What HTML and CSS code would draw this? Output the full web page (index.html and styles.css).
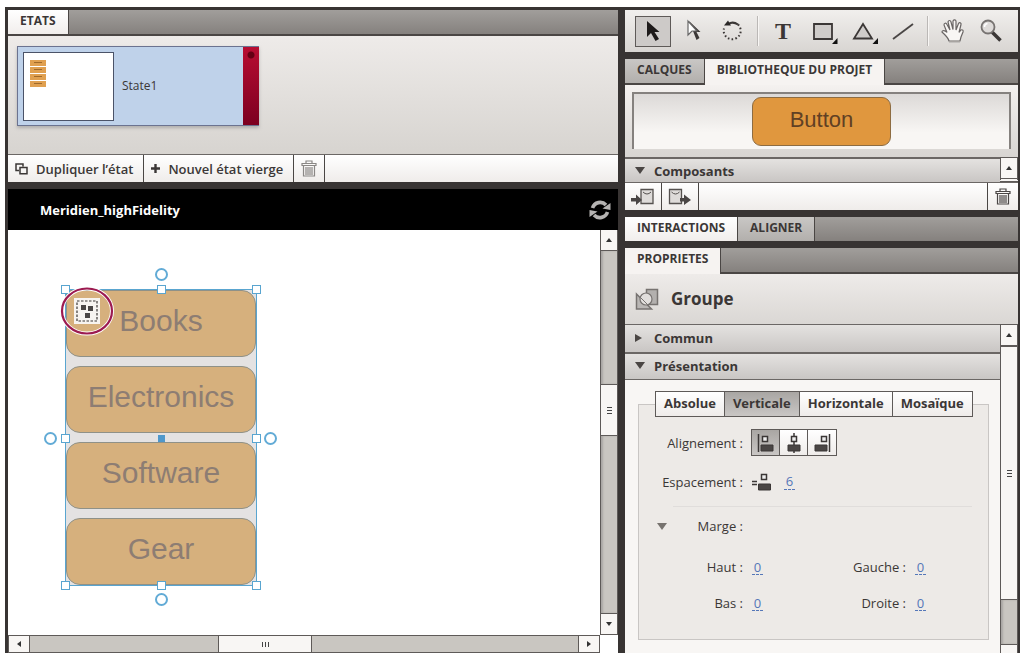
FILE: index.html
```html
<!DOCTYPE html>
<html lang="fr">
<head>
<meta charset="utf-8">
<title>Meridien_highFidelity</title>
<link rel="stylesheet" href="styles.css">
</head>
<body>
<div class="app">
  <main class="column">
    <section class="states">
      <div class="tabs"><button class="tab active">ETATS</button></div>
      <div class="states-body">
        <button class="state-card">
          <span class="thumb"><span class="mini"><i></i><i></i><i></i><i></i></span></span>
          <span class="state-name">State1</span>
          <span class="state-strip"></span>
        </button>
      </div>
      <div class="actions">
        <button class="action">
          <svg width="13" height="12" viewBox="0 0 13 12" fill="none" stroke="#3b3736" stroke-width="1.5"><path d="M4 7.500H1V1h7v2.500M5 4.500h7v6.300H5z"/></svg>
          Dupliquer l’état</button>
        <button class="action">
          <svg width="9" height="9" viewBox="0 0 9 9" stroke="#3b3736" stroke-width="2.400"><path d="M4.500 0v9M0 4.500h9"/></svg>
          Nouvel état vierge</button>
        <button class="action trash" aria-label="Supprimer l’état">
          <svg width="16" height="17" viewBox="0 0 16 17" fill="none" stroke="#8a8785" stroke-width="1.200"><path d="M1 5.500V3.500h14v2zM5 3V1h6v2M2.500 6v10h11V6M5 7v8M7 7v8M9 7v8M11 7v8"/></svg>
        </button>
      </div>
    </section>

    <section class="document">
      <header class="doc-head">
        <h1>Meridien_highFidelity</h1>
        <button class="refresh" aria-label="Actualiser">
          <svg width="22" height="22" viewBox="0 0 22 22" fill="none" stroke="#b5b3b2" stroke-width="3.600"><path d="M3.500 9a8 8 0 0 1 13.500-3M18.500 13a8 8 0 0 1-13.500 3"/><path d="M21.500 4v7l-8-1.500zM.5 18v-7l8 1.500z" fill="#b5b3b2" stroke="none"/></svg>
        </button>
      </header>
      <div class="work">
        <div class="canvas">
          <div class="group">
            <span class="item">Books</span>
            <span class="item">Electronics</span>
            <span class="item">Software</span>
            <span class="item">Gear</span>
            <i class="handle n w"></i><i class="handle n mid"></i><i class="handle n e"></i>
            <i class="handle w half"></i><i class="handle e half"></i>
            <i class="handle s w"></i><i class="handle s mid"></i><i class="handle s e"></i>
            <i class="pivot"></i>
            <i class="knob top"></i><i class="knob left"></i><i class="knob right"></i><i class="knob bottom"></i>
            <svg class="badge" width="54" height="50" viewBox="0 0 54 50">
              <rect x="14" y="12" width="26" height="26" fill="#f7f4f1"/>
              <rect x="17" y="15" width="20" height="20" fill="none" stroke="#3b3736" stroke-width="1.200" stroke-dasharray="2.500 1.500"/>
              <path d="M21 19h5v5h-5zM28 20h5v5h-5zM25 27h5v5h-5z" fill="#4a4645"/>
              <ellipse cx="27" cy="25" rx="25" ry="22.500" fill="none" stroke="#fff" stroke-width="4"/>
              <ellipse cx="27" cy="25" rx="25" ry="22.500" fill="none" stroke="#9c1a50" stroke-width="2.200"/>
            </svg>
          </div>
        </div>
        <div class="vbar">
          <button class="sb" aria-label="Haut"><i class="tri up"></i></button>
          <div class="track before"></div>
          <div class="grip">
            <svg width="5" height="8" viewBox="0 0 5 8" stroke="#444"><path d="M0 1.500h5M0 4.500h5M0 7.500h5"/></svg>
          </div>
          <div class="track after"></div>
          <button class="sb" aria-label="Bas"><i class="tri down"></i></button>
        </div>
        <div class="hbar">
          <button class="sb" aria-label="Gauche"><i class="tri prev"></i></button>
          <div class="track before"></div>
          <div class="grip">
            <svg width="8" height="5" viewBox="0 0 8 5" stroke="#444"><path d="M1.500 0v5M4.500 0v5M7.500 0v5"/></svg>
          </div>
          <div class="track after"></div>
          <button class="sb" aria-label="Droite"><i class="tri next"></i></button>
        </div>
      </div>
    </section>
  </main>

  <aside class="column">
    <div class="toolbar">
      <button class="tool on" aria-label="Sélection"><svg width="30" height="28" viewBox="0 0 30 28"><path d="M9 4v16l4-4 4.500 8 3.500-2-4.500-7h5z" fill="#1d1a1a"/></svg></button>
      <button class="tool" aria-label="Sous-sélection"><svg width="30" height="28" viewBox="0 0 30 28"><path d="M15 14l3.500 9 3-2-3-6h4L11 4z" fill="#3b3736"/><path d="M10 4v14l4-4h5z" fill="#fff" stroke="#666" stroke-width="1.200"/></svg></button>
      <button class="tool" aria-label="Rotation"><svg width="30" height="28" viewBox="0 0 30 28" fill="none" stroke="#3b3736" stroke-width="2"><path d="M10 7q5-3 10 0.500"/><path d="M20 7.500a8.500 8.500 0 1 1-14 4" stroke-dasharray="1.600 2.200"/><path d="M6 8.500l4-5 3 5z" fill="#2b2828" stroke="none"/></svg></button>
      <span class="sep"></span>
      <button class="tool type">T</button>
      <button class="tool" aria-label="Rectangle"><svg width="30" height="28" viewBox="0 0 30 28"><path d="M6 7h18v15H6z" fill="#cfccca" stroke="#3b3736" stroke-width="1.800"/><path d="M29.500 21v6H24z" fill="#111"/></svg></button>
      <button class="tool" aria-label="Triangle"><svg width="30" height="28" viewBox="0 0 30 28"><path d="M15 7L24 21.500H6z" fill="#cfccca" stroke="#3b3736" stroke-width="1.800"/><path d="M30 21v6h-5.500z" fill="#111"/></svg></button>
      <button class="tool" aria-label="Ligne"><svg width="30" height="28" viewBox="0 0 30 28"><path d="M5 22L25 7" stroke="#4a4645" stroke-width="1.800"/></svg></button>
      <span class="sep"></span>
      <button class="tool" aria-label="Main"><svg width="30" height="28" viewBox="0 0 30 28"><path d="M11 24c-1-4-4-6-7-9 0-2 3-2 5 .5L6 8c0-2 2-2.500 3-.5l3 5.500-2-8c.5-2 2.500-2 3 0l2 7.500V4c1-1.800 3-1.200 3 .5v8.500l2.500-6.500c1-1.500 3-.5 2.500 1l-2 8 2-2.500c1.500-.8 2.500.5 2 2L23 20l-1 4z" fill="#f8f6f4" stroke="#6a6665" stroke-width="1.200"/><path d="M11 25h11" stroke="#aaa7a5"/></svg></button>
      <button class="tool" aria-label="Zoom"><svg width="30" height="28" viewBox="0 0 30 28"><path d="M14 15l8.500 8.500" stroke="#3b3736" stroke-width="3.600"/><circle cx="10" cy="10" r="6.500" fill="#dedbd9" stroke="#777371" stroke-width="1.800"/><path d="M6.500 10a3.500 3.500 0 0 1 3-3.500" stroke="#fff" stroke-width="1.500" fill="none"/></svg></button>
    </div>

    <section class="library">
      <div class="tabs"><button class="tab">CALQUES</button><button class="tab active">BIBLIOTHEQUE DU PROJET</button></div>
      <div class="preview"><div class="well"><span class="sample">Button</span></div></div>
      <div class="lib-head">
        <button class="bar"><i class="caret open"></i>Composants</button>
        <button class="sb" aria-label="Défiler"><i class="tri up"></i></button>
      </div>
      <div class="actions lib-actions">
        <button class="action" aria-label="Importer"><svg width="24" height="18" viewBox="0 0 24 18"><path d="M10 1.500h12v14H10z" fill="#dedbd9" stroke="#55514f" stroke-width="1.300"/><path d="M12 4q4 4 8 0" fill="none" stroke="#55514f"/><path d="M0 10h5V6.500l6 5.500-6 5v-3.500H0z" fill="#4a4645"/></svg></button>
        <button class="action" aria-label="Exporter"><svg width="24" height="18" viewBox="0 0 24 18"><path d="M1.500 1.500h12v14h-12z" fill="#dedbd9" stroke="#55514f" stroke-width="1.300"/><path d="M3.500 4q4 4 8 0" fill="none" stroke="#55514f"/><path d="M12 10h4V6.500l7 5.500-7 5v-3.500h-4z" fill="#4a4645"/></svg></button>
        <button class="action last" aria-label="Supprimer"><svg width="16" height="17" viewBox="0 0 16 17" fill="none" stroke="#4a4645" stroke-width="1.200"><path d="M1 5.500V3.500h14v2zM5 3V1h6v2M2.500 6v10h11V6M5 7v8M7 7v8M9 7v8M11 7v8"/></svg></button>
      </div>
    </section>

    <div class="tabs short"><button class="tab active">INTERACTIONS</button><button class="tab">ALIGNER</button></div>

    <section class="props">
      <div class="tabs"><button class="tab active">PROPRIETES</button></div>
      <div class="props-title">
        <svg width="24" height="23" viewBox="0 0 24 23"><path d="M11.500 1.500h11v15h-11z" fill="#b3b0ae" stroke="#777371" stroke-width="1.500"/><path d="M1.500 6v15h15z" fill="#bab7b5" stroke="#777371" stroke-width="1.500"/><circle cx="11" cy="11" r="6" fill="#e2dfdd" stroke="#777371" stroke-width="1.200"/><path d="M5 9l9 9" stroke="#777371"/></svg>
        <h2>Groupe</h2>
      </div>
      <div class="props-main">
        <div class="props-list">
          <button class="bar"><i class="caret"></i>Commun</button>
          <button class="bar second"><i class="caret open"></i>Présentation</button>
          <div class="form">
            <fieldset>
              <legend><span class="modes"><button>Absolue</button><button class="on">Verticale</button><button>Horizontale</button><button>Mosaïque</button></span></legend>
              <div class="row align">
                <span class="label">Alignement :</span>
                <span class="aligns">
                  <button class="on" aria-label="Gauche"><svg width="20" height="20" viewBox="0 0 20 20"><path d="M2.500 1v18" stroke="#3b3736" stroke-width="1.500"/><path d="M6.500 3.500h5v5h-5z" fill="#eee" stroke="#3b3736" stroke-width="1.500"/><path d="M5 12h12v6H5z" fill="#4a4645" stroke="#3b3736"/></svg></button>
                  <button aria-label="Centre"><svg width="20" height="20" viewBox="0 0 20 20"><path d="M10 0v20" stroke="#3b3736" stroke-width="1.500"/><path d="M7.500 3.500h5v5h-5z" fill="#eee" stroke="#3b3736" stroke-width="1.500"/><path d="M4 12h12v6H4z" fill="#4a4645" stroke="#3b3736"/></svg></button>
                  <button aria-label="Droite"><svg width="20" height="20" viewBox="0 0 20 20"><path d="M17.500 1v18" stroke="#3b3736" stroke-width="1.500"/><path d="M9.500 3.500h5v5h-5z" fill="#eee" stroke="#3b3736" stroke-width="1.500"/><path d="M3 12h12v6H3z" fill="#4a4645" stroke="#3b3736"/></svg></button>
                </span>
              </div>
              <div class="row spacing">
                <label class="label" for="gap">Espacement :</label>
                <svg width="21" height="18" viewBox="0 0 21 18"><path d="M1 8.500h5M1 11.500h5" stroke="#3b3736" stroke-width="1.500"/><path d="M10.500 1.500h5v5h-5z" fill="#eee" stroke="#3b3736" stroke-width="1.500"/><path d="M7.500 11h12v6h-12z" fill="#4a4645" stroke="#3b3736"/></svg>
                <input class="hot" id="gap" value="6">
              </div>
              <hr>
              <div class="row margin-row"><i class="caret open"></i><span class="label">Marge :</span></div>
              <div class="row pair">
                <label class="label" for="top">Haut :</label><input class="hot" id="top" value="0">
                <label class="label" for="left">Gauche :</label><input class="hot" id="left" value="0">
              </div>
              <div class="row pair">
                <label class="label" for="bottom">Bas :</label><input class="hot" id="bottom" value="0">
                <label class="label" for="right">Droite :</label><input class="hot" id="right" value="0">
              </div>
            </fieldset>
          </div>
        </div>
        <div class="vbar props-bar">
          <button class="sb" aria-label="Haut"><i class="tri up"></i></button>
          <div class="grip">
            <svg width="5" height="8" viewBox="0 0 5 8" stroke="#444"><path d="M0 1.500h5M0 4.500h5M0 7.500h5"/></svg>
          </div>
          <div class="track after"></div>
          <div class="rest"></div>
        </div>
      </div>
    </section>
  </aside>
</div>
</body>
</html>
```
FILE: styles.css
```css
* { box-sizing: border-box; }

body {
  margin: 0;
  background: #fff;
  color: #3b3736;
  font: 13px/16px "Open Sans", "Noto Sans", sans-serif;
}

button {
  margin: 0;
  padding: 0;
  border: 0;
  background: none;
  color: inherit;
  font: inherit;
}

svg { display: block; flex: none; }
h1, h2 { margin: 0; }

.app {
  display: grid;
  grid-template-columns: minmax(0, 610fr) minmax(0, 393fr);
  gap: 7px;
  height: calc(100vh - 7px);
  margin: 7px 3px 0 5px;
  padding: 3px 2px 0 3px;
  overflow: hidden;
  background: #383433;
}

.column {
  display: flex;
  flex-direction: column;
  gap: 7px;
  min-width: 0;
  min-height: 0;
}

/* Tabs */
.tabs {
  display: flex;
  height: 26px;
  flex: none;
  background: linear-gradient(#a19e9b, #85817e);
  border-bottom: 2px solid #4a4644;
}

.tab {
  padding: 0 12px 3px 12px;
  font-size: 12px;
  font-weight: 700;
  white-space: nowrap;
  background: linear-gradient(#c9c7c5, #b2afac);
  border-right: 1px solid #4a4644;
}

.tab.active { background: linear-gradient(#fff, #f1eeec); }

.library .tab.active,
.props .tab.active {
  height: 26px;
  padding-bottom: 5px;
  background: #f6f3f1;
}

.short { height: 24px; border-bottom: 0; }

/* States */
.states-body {
  height: 118px;
  padding: 10px 9px;
  background: linear-gradient(#eeebe9, #d7d4d0);
}

.state-card {
  display: flex;
  align-items: center;
  width: 242px;
  height: 80px;
  padding-left: 5px;
  text-align: left;
  background: #bfd2ea;
  border: 1px solid #6b7390;
  border-right: 0;
  box-shadow: 0 2px 3px #8888;
}

.thumb {
  width: 91px;
  height: 69px;
  padding: 7px 6px;
  background: #fff;
  border: 1px solid #4b5368;
}

.mini {
  display: flex;
  flex-direction: column;
  gap: 1px;
  width: 16px;
}

.mini i {
  height: 6px;
  background: linear-gradient(90deg, #0000 25%, #a06a2a 25% 75%, #0000 75%) center / 100% 1px no-repeat #e0a050;
}

.state-name { flex: 1; padding-left: 8px; font-size: 12px; }

.state-strip {
  align-self: stretch;
  width: 16px;
  background: radial-gradient(circle at 8px 8px, #650014 3px, #0000 4px), linear-gradient(#b80d32, #7c0020);
}

.actions {
  display: flex;
  height: 28px;
  background: linear-gradient(#fff, #efecea);
  border-top: 1px solid #6b6765;
}

.action {
  display: flex;
  align-items: center;
  gap: 8px;
  padding: 0 10px 0 7px;
  font-weight: 600;
  border-right: 1px solid #4a4644;
}

.trash { padding: 0 7px; }

/* Document */
.document {
  display: flex;
  flex: 1;
  flex-direction: column;
  min-height: 0;
}

.doc-head {
  display: flex;
  flex: none;
  align-items: center;
  justify-content: space-between;
  height: 41px;
  padding: 0 7px 0 32px;
  background: #000;
  color: #fff;
}

.doc-head h1 { font-size: 13px; font-weight: 700; }

.work {
  display: grid;
  flex: 1;
  grid-template-columns: minmax(0, 1fr) 18px;
  grid-template-rows: minmax(0, 1fr) 18px;
  min-height: 0;
  background: #fff;
}

.canvas {
  position: relative;
  overflow: hidden;
}

.group {
  position: absolute;
  top: 59px;
  left: 57px;
  display: flex;
  flex-direction: column;
  justify-content: space-between;
  width: 192px;
  height: 297px;
  background: #e4e2e2;
  border: 1px solid #59a5d0;
}

.item {
  display: flex;
  align-items: center;
  justify-content: center;
  height: 67px;
  padding-bottom: 6px;
  color: #8d7d73;
  font: 30px/32px "Liberation Sans", Arial, sans-serif;
  background: #d6b07d;
  border: 1px solid #8f9188;
  border-radius: 14px;
}

.item:first-child { border-radius: 4px 14px 14px 14px; }

.handle, .knob, .pivot { position: absolute; }

.handle {
  width: 9px;
  height: 9px;
  background: #fff;
  border: 1px solid #59a5d0;
}

.n { top: -5px; }
.s { bottom: -5px; }
.w { left: -5px; }
.e { right: -5px; }
.mid { left: calc(50% - 4px); }
.half { top: calc(50% - 4px); }

.pivot {
  top: calc(50% - 3px);
  left: calc(50% - 3px);
  width: 7px;
  height: 7px;
  background: #4f98cb;
}

.knob {
  width: 13px;
  height: 13px;
  background: #fff;
  border: 2px solid #62abd6;
  border-radius: 50%;
}

.top { top: -22px; left: calc(50% - 6px); }
.bottom { bottom: -21px; left: calc(50% - 6px); }
.left { top: calc(50% - 6px); left: -22px; }
.right { top: calc(50% - 6px); right: -21px; }

.badge { position: absolute; top: -4px; left: -6px; }

/* Scroll bars */
.vbar {
  display: flex;
  flex-direction: column;
  min-height: 0;
  border: 1px solid #5e5a58;
  border-width: 0 1px 1px;
}

.hbar {
  display: flex;
  min-width: 0;
  border: 1px solid #5e5a58;
}

.sb {
  display: grid;
  flex: none;
  place-items: center;
  width: 20px;
  background: #f8f6f4;
}

.vbar .sb { width: auto; height: 20px; }

.track { background: #c9c6c1; }
.vbar .track { box-shadow: inset 2px 0 2px #aaa7a4; }

.grip {
  display: grid;
  place-items: center;
  background: #f8f6f4;
  border: 1px solid #5e5a58;
}

.vbar .grip { height: 52px; border-width: 1px 0; }
.vbar .before { flex: 133; border-top: 1px solid #5e5a58; }
.vbar .after { flex: 178; border-bottom: 1px solid #5e5a58; }
.hbar .grip { width: 94px; border-width: 0 1px; }
.hbar .before { flex: 188; border-left: 1px solid #5e5a58; }
.hbar .after { flex: 267; border-right: 1px solid #5e5a58; }

.tri { border: 3px solid #0000; }
.up { border-top: 0; border-bottom: 4px solid #333; }
.down { border-bottom: 0; border-top: 4px solid #333; }
.prev { border-left: 0; border-right: 4px solid #333; }
.next { border-right: 0; border-left: 4px solid #333; }

/* Tools */
.toolbar {
  display: flex;
  flex: none;
  align-items: center;
  gap: 4px;
  height: 42px;
  padding-left: 10px;
  background: linear-gradient(#f1efed, #d8d5d2);
}

.tool {
  display: grid;
  place-items: center;
  width: 36px;
  height: 31px;
  border: 1px solid #0000;
}

.tool.on { background: #cdcac8; border: 1px solid #5e5a58; }
.type { font: 700 24px/28px "Liberation Serif", "Times New Roman", serif; }
.sep { width: 2px; height: 30px; margin: 0 2px; background: #bbb8b6; border-right: 1px solid #f8f6f4; }

/* Library */
.preview {
  height: 72px;
  padding: 7px 7px 8px;
  background: linear-gradient(#f4f1ef, #d8d5d2);
}

.well {
  display: flex;
  justify-content: center;
  height: 57px;
  padding-top: 3px;
  background: linear-gradient(#dcd9d7, #f8f6f4 70%);
  border: 2px solid #85817e;
  border-bottom: 0;
}

.sample {
  width: 139px;
  height: 49px;
  color: #604024;
  font: 22px/44px "Liberation Sans", Arial, sans-serif;
  text-align: center;
  background: #e0973e;
  border: 1px solid #8d6c42;
  border-radius: 9px;
}

.lib-head { display: flex; height: 25px; }

.bar {
  display: flex;
  flex: 1;
  align-items: center;
  gap: 9px;
  padding-left: 10px;
  font-weight: 700;
  background: linear-gradient(#e4e2e0, #c9c6c4);
  border-top: 2px solid #6b6765;
}

.lib-head .sb {
  width: 18px;
  border: 1px solid #5e5a58;
  border-bottom: 4px double #5e5a58;
}

.caret {
  flex: none;
  width: 10px;
  border: 4px solid #0000;
  border-left: 7px solid #4a4644;
  border-right: 0;
}

.caret.open {
  border: 5px solid #0000;
  border-top: 7px solid #4a4644;
  border-bottom: 0;
}

.lib-actions .action { justify-content: center; width: 37px; padding: 0; }
.lib-actions .last {
  width: 31px;
  margin-left: auto;
  border-right: 0;
  border-left: 1px solid #4a4644;
}

/* Properties */
.props {
  display: flex;
  flex: 1;
  flex-direction: column;
  min-height: 0;
}

.props-title {
  display: flex;
  flex: none;
  align-items: center;
  gap: 12px;
  height: 50px;
  padding: 0 10px;
  background: linear-gradient(#eeebe9, #dad7d4);
}

.props-title h2 { font-size: 17px; line-height: 24px; font-weight: 700; }

.props-main {
  display: grid;
  flex: 1;
  grid-template-columns: minmax(0, 1fr) 18px;
  min-height: 0;
}

.props-list {
  display: flex;
  flex-direction: column;
  min-height: 0;
}

.props-list .bar { flex: none; height: 28px; padding-bottom: 2px; border-top-width: 1px; }
.props-list .second { height: 27px; border-top-width: 2px; }

.form {
  flex: 1;
  padding: 11px 11px 0 13px;
  background: #f8f6f4;
  border-top: 1px solid #6b6765;
}

fieldset {
  min-width: 0;
  height: 249px;
  margin: 0;
  padding: 12px 16px 0 0;
  background: #edeae7;
  border: 1px solid #c9c6c4;
}

legend { margin-left: 16px; padding: 0; }

.modes {
  display: flex;
  border: 1px solid #5e5a58;
}

.modes button {
  height: 24px;
  padding: 0 8px 2px;
  font-weight: 700;
  background: linear-gradient(#fff, #efecea);
  border-right: 1px solid #5e5a58;
}

.modes button:last-child { border-right: 0; }
.modes .on, .aligns .on { background: linear-gradient(#a9a6a3, #c9c6c4); }

.row { display: flex; align-items: center; }
.label { flex: none; width: 104px; text-align: right; }

.align, .spacing { gap: 8px; height: 27px; }
.spacing { margin-top: 12px; }
.spacing .hot { margin-left: 4px; }

.aligns { display: flex; border: 1px solid #5e5a58; }

.aligns button {
  display: grid;
  place-items: center;
  width: 28px;
  height: 25px;
  background: linear-gradient(#fff, #efecea);
  border-right: 1px solid #5e5a58;
}

.aligns button:last-child { border-right: 0; }

.hot {
  width: 11px;
  height: 16px;
  padding: 0;
  border: 0;
  border-bottom: 1px dashed #5577b8;
  background: none;
  color: #5577b8;
  font: inherit;
  text-align: center;
}

hr { margin: 11px 0 9px 34px; border: 0; border-top: 1px solid #e0dddb; }

.margin-row { height: 20px; padding-left: 18px; }
.margin-row .label { width: 76px; }
.margin-row .caret { border-top-color: #77736f; }
.pair { gap: 9px; height: 36px; }
.pair .label:nth-of-type(2) { width: 134px; }
.margin-row + .pair { margin-top: 13px; }

.props-bar { border-bottom: 0; border-top: 1px solid #5e5a58; }
.props-bar .grip { flex: 255; border-top: 2px solid #5e5a58; }
.props-bar .track.after { flex: 44; }
.props-bar .rest { height: 8px; background: #f8f6f4; }
```
